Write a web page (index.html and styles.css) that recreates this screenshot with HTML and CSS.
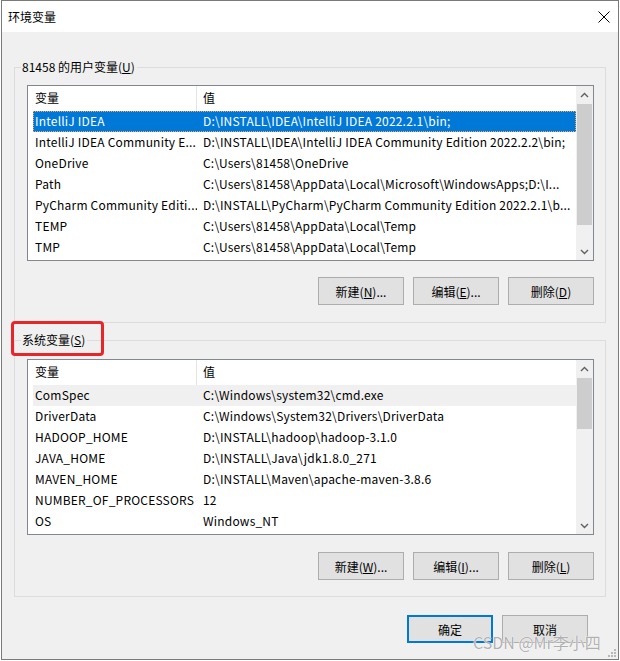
FILE: index.html
```html
<!DOCTYPE html>
<html lang="zh-CN">
<head>
<meta charset="utf-8">
<title>环境变量</title>
<link rel="stylesheet" href="styles.css">
</head>
<body>
<div class="window">
  <div class="titlebar">
    <span class="title">环境变量</span>
    <svg class="close" width="12" height="12" viewBox="0 0 12 12"><path d="M0.5 0.5 L11.5 11.5 M11.5 0.5 L0.5 11.5" stroke="#000" stroke-width="1" fill="none"/></svg>
  </div>
  <div class="content">
    <div class="group group-user">
      <div class="legend">81458 的用户变量(<u>U</u>)</div>
      <div class="list">
        <div class="table">
          <div class="row head"><div class="c1">变量</div><div class="c2">值</div></div>
          <div class="row sel"><div class="c1">IntelliJ IDEA</div><div class="c2">D:\INSTALL\IDEA\IntelliJ IDEA 2022.2.1\bin;</div></div>
          <div class="row"><div class="c1">IntelliJ IDEA Community E...</div><div class="c2">D:\INSTALL\IDEA\IntelliJ IDEA Community Edition 2022.2.2\bin;</div></div>
          <div class="row"><div class="c1">OneDrive</div><div class="c2">C:\Users\81458\OneDrive</div></div>
          <div class="row"><div class="c1">Path</div><div class="c2">C:\Users\81458\AppData\Local\Microsoft\WindowsApps;D:\I...</div></div>
          <div class="row"><div class="c1">PyCharm Community Editi...</div><div class="c2">D:\INSTALL\PyCharm\PyCharm Community Edition 2022.2.1\b...</div></div>
          <div class="row"><div class="c1">TEMP</div><div class="c2">C:\Users\81458\AppData\Local\Temp</div></div>
          <div class="row"><div class="c1">TMP</div><div class="c2">C:\Users\81458\AppData\Local\Temp</div></div>
        </div>
        <div class="scroll">
          <div class="arrow"><svg width="9" height="6" viewBox="0 0 9 6"><path d="M1 5 L4.5 1.5 L8 5" stroke="#606060" stroke-width="1.4" fill="none"/></svg></div>
          <div class="track"><div class="thumb thumb-user"></div></div>
          <div class="arrow"><svg width="9" height="6" viewBox="0 0 9 6"><path d="M1 1 L4.5 4.5 L8 1" stroke="#606060" stroke-width="1.4" fill="none"/></svg></div>
        </div>
      </div>
      <div class="buttons">
        <div class="btn">新建(<u>N</u>)...</div>
        <div class="btn">编辑(<u>E</u>)...</div>
        <div class="btn">删除(<u>D</u>)</div>
      </div>
    </div>

    <div class="group group-sys">
      <div class="legend">系统变量(<u>S</u>)</div>
      <div class="mark"></div>
      <div class="list">
        <div class="table">
          <div class="row head"><div class="c1">变量</div><div class="c2">值</div></div>
          <div class="row hl"><div class="c1">ComSpec</div><div class="c2">C:\Windows\system32\cmd.exe</div></div>
          <div class="row"><div class="c1">DriverData</div><div class="c2">C:\Windows\System32\Drivers\DriverData</div></div>
          <div class="row"><div class="c1">HADOOP_HOME</div><div class="c2">D:\INSTALL\hadoop\hadoop-3.1.0</div></div>
          <div class="row"><div class="c1">JAVA_HOME</div><div class="c2">D:\INSTALL\Java\jdk1.8.0_271</div></div>
          <div class="row"><div class="c1">MAVEN_HOME</div><div class="c2">D:\INSTALL\Maven\apache-maven-3.8.6</div></div>
          <div class="row"><div class="c1">NUMBER_OF_PROCESSORS</div><div class="c2">12</div></div>
          <div class="row"><div class="c1">OS</div><div class="c2">Windows_NT</div></div>
        </div>
        <div class="scroll">
          <div class="arrow"><svg width="9" height="6" viewBox="0 0 9 6"><path d="M1 5 L4.5 1.5 L8 5" stroke="#606060" stroke-width="1.4" fill="none"/></svg></div>
          <div class="track"><div class="thumb thumb-sys"></div></div>
          <div class="arrow"><svg width="9" height="6" viewBox="0 0 9 6"><path d="M1 1 L4.5 4.5 L8 1" stroke="#606060" stroke-width="1.4" fill="none"/></svg></div>
        </div>
      </div>
      <div class="buttons">
        <div class="btn">新建(<u>W</u>)...</div>
        <div class="btn">编辑(<u>I</u>)...</div>
        <div class="btn">删除(<u>L</u>)</div>
      </div>
    </div>

    <div class="footer">
      <div class="btn btn-default">确定</div>
      <div class="btn">取消</div>
    </div>
  </div>
  <div class="watermark">CSDN @Mr李小四</div>
  <svg class="grip" width="8" height="8" viewBox="0 0 8 8">
    <rect x="6" y="0" width="2" height="2" fill="#b8b8b8"/>
    <rect x="3" y="3" width="2" height="2" fill="#b8b8b8"/>
    <rect x="6" y="3" width="2" height="2" fill="#b8b8b8"/>
    <rect x="0" y="6" width="2" height="2" fill="#b8b8b8"/>
    <rect x="3" y="6" width="2" height="2" fill="#b8b8b8"/>
    <rect x="6" y="6" width="2" height="2" fill="#b8b8b8"/>
  </svg>
</div>
</body>
</html>
```

FILE: styles.css
```css
* { box-sizing: border-box; }

html, body {
  margin: 0;
  padding: 0;
  background: #ffffff;
}

body {
  font-family: "Noto Sans CJK SC", "Noto Sans", sans-serif;
  font-size: 12px;
  color: #000;
}

.window {
  position: relative;
  margin-left: 1px;
  width: 618px;
  height: 660px;
  border: 1px solid #7a7a7a;
  background: #f0f0f0;
  display: flex;
  flex-direction: column;
}

.titlebar {
  height: 31px;
  background: #ffffff;
  display: flex;
  align-items: center;
  justify-content: space-between;
  padding: 0 8px 0 6px;
}

.title {
  font-size: 12px;
  line-height: 16px;
}

.close {
  display: block;
}

.content {
  padding-left: 12px;
  display: flex;
  flex-direction: column;
}

.group {
  position: relative;
  width: 592px;
  border: 1px solid #dcdcdc;
  padding: 17px 11px 0 12px;
  display: flex;
  flex-direction: column;
}

.group-user {
  margin-top: 35px;
  height: 256px;
}

.group-sys {
  margin-top: 17px;
  height: 257px;
  padding-top: 18px;
}

.legend {
  position: absolute;
  left: 6px;
  top: -9px;
  padding: 0 2px 0 1px;
  line-height: 16px;
  background: #f0f0f0;
  white-space: nowrap;
}

.mark {
  position: absolute;
  left: -4px;
  top: -20px;
  width: 93px;
  height: 35px;
  border: 3px solid #e8262a;
  border-radius: 4px;
}

.list {
  width: 567px;
  height: 176px;
  border: 1px solid #828790;
  background: #ffffff;
  display: flex;
}

.table {
  width: 548px;
  padding-left: 5px;
  display: flex;
  flex-direction: column;
  overflow: hidden;
}

.row {
  display: flex;
  height: 21px;
  line-height: 20px;
  letter-spacing: 0.2px;
  white-space: nowrap;
}

.row .c1 {
  width: 164px;
  padding-left: 2px;
  overflow: hidden;
  flex-shrink: 0;
}

.row .c2 {
  flex: 1;
  padding-left: 6px;
  overflow: hidden;
}

.row.head {
  height: 25px;
  line-height: 24px;
  letter-spacing: 0;
}

.row.head .c1 {
  border-right: 1px solid #e5e5e5;
}

.row.sel {
  background: #0078d7;
  color: #ffffff;
  outline: 1px dotted #f3a75a;
  outline-offset: -1px;
}

.row.hl {
  background: #f0f0f0;
}

.scroll {
  width: 17px;
  background: #f0f0f0;
  display: flex;
  flex-direction: column;
}

.arrow {
  height: 17px;
  display: flex;
  align-items: center;
  justify-content: center;
}

.arrow svg {
  display: block;
}

.track {
  flex: 1;
  padding-top: 1px;
}

.thumb {
  width: 15px;
  margin-left: 1px;
  background: #cdcdcd;
}

.thumb-user { height: 121px; }
.thumb-sys { height: 51px; }

.buttons {
  margin-top: 16px;
  display: flex;
  justify-content: flex-end;
  gap: 9px;
}

.group-sys .buttons {
  margin-top: 17px;
}

.btn {
  width: 86px;
  height: 28px;
  border: 1px solid #adadad;
  background: #e1e1e1;
  display: flex;
  align-items: center;
  justify-content: center;
  white-space: nowrap;
}

.footer {
  margin-top: 18px;
  padding-right: 30px;
  display: flex;
  justify-content: flex-end;
  gap: 9px;
}

.btn-default {
  border: 2px solid #0078d7;
}

.watermark {
  position: absolute;
  left: 471px;
  top: 631px;
  font-size: 16px;
  line-height: 20px;
  color: rgba(150, 150, 150, 0.75);
  text-shadow: 0 0 1px #ffffff, 0 0 1px #ffffff;
  white-space: nowrap;
}

.grip {
  position: absolute;
  right: 2px;
  bottom: 2px;
}
```
